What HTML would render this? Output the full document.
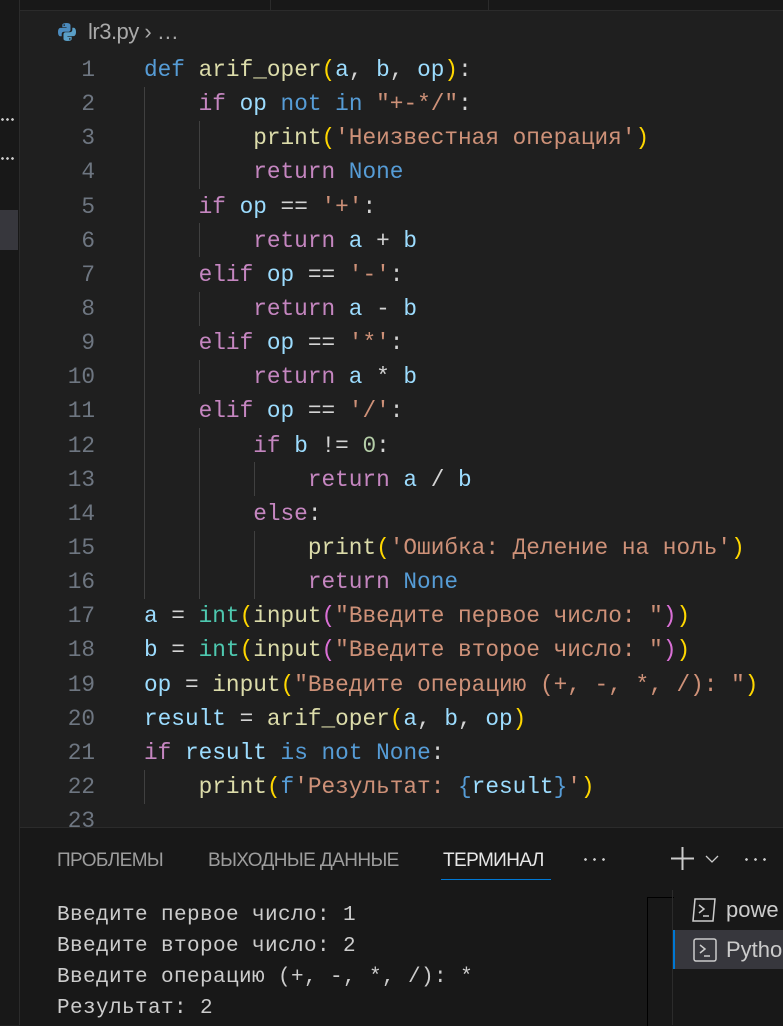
<!DOCTYPE html><html><head><meta charset="utf-8"><style>
*{margin:0;padding:0}
body{width:783px;height:1025px;background:#1f1f1f;position:relative;overflow:hidden;font-family:"Liberation Mono",monospace}
.left{position:absolute;left:0;top:0;width:19px;height:1025px;background:#181818;border-right:1px solid #2b2b2b}
.top{position:absolute;left:20px;top:0;width:763px;height:10px;background:#181818;border-bottom:1px solid #2b2b2b}
.ln{position:absolute;left:40px;width:55px;text-align:right;color:#6e7681;font-size:22.75px;line-height:34.14px}
.code{position:absolute;left:144px;font-size:22.75px;line-height:34.14px;color:#d4d4d4;white-space:pre}
.k{color:#569cd6}.f{color:#dcdcaa}.p{color:#9cdcfe}.c{color:#c586c0}.s{color:#ce9178}.y{color:#ffd700}.m{color:#da70d6}.n{color:#b5cea8}.t{color:#4ec9b0}
.g{position:absolute;width:1px;background:#404040}
.panel{position:absolute;left:20px;top:827px;width:763px;height:198px;background:#181818;border-top:1px solid #2b2b2b}
.tab{position:absolute;top:850px;font-family:"Liberation Sans",sans-serif;font-size:19px;color:#9d9d9d;letter-spacing:-0.6px}
.term{position:absolute;left:57px;top:900px;font-size:21px;line-height:31px;color:#cccccc;white-space:pre;letter-spacing:0.4px}
.dots{position:absolute;left:0;width:14px;height:3px;background:radial-gradient(circle,#ccc 1.2px,transparent 1.5px) 0 0/5px 3px repeat-x}
</style></head><body>
<div class="left"></div>
<div class="dots" style="top:118px"></div>
<div class="dots" style="top:157px"></div>
<div style="position:absolute;left:0;top:210px;width:18px;height:40px;background:#37373d"></div>
<div class="top"></div>
<div style="position:absolute;left:270px;top:0;width:1px;height:10px;background:#2b2b2b"></div>
<div style="position:absolute;left:488px;top:0;width:1px;height:10px;background:#2b2b2b"></div>
<svg style="position:absolute;left:57px;top:22px" width="20" height="20" viewBox="0 0 20 20"><path d="M9.5 1C5 1 5.3 3 5.3 3v2.2h4.3v.7H3.6S1 5.6 1 10s2.3 4.3 2.3 4.3h1.4v-2.1s-.1-2.4 2.3-2.4h4.2s2.3 0 2.3-2.2V3.4S13.8 1 9.5 1zM7.2 2.3a.8.8 0 110 1.6.8.8 0 010-1.6z" fill="#4b8bbe"/><path d="M10.5 19c4.5 0 4.2-2 4.2-2v-2.2h-4.3v-.7h6S19 14.4 19 10s-2.3-4.3-2.3-4.3h-1.4v2.1s.1 2.4-2.3 2.4H8.8s-2.3 0-2.3 2.2v4.2S6.2 19 10.5 19zm2.3-1.3a.8.8 0 110-1.6.8.8 0 010 1.6z" fill="#5a9fc7"/></svg>
<div style="position:absolute;left:88px;top:19px;font-family:'Liberation Sans',sans-serif;font-size:22px;color:#a9a9a9;letter-spacing:-0.5px">lr3.py <span style="font-size:22px">›</span> …</div>
<div class="ln" style="top:53px">1<br>2<br>3<br>4<br>5<br>6<br>7<br>8<br>9<br>10<br>11<br>12<br>13<br>14<br>15<br>16<br>17<br>18<br>19<br>20<br>21<br>22<br>23</div>
<div class="g" style="left:144px;top:87px;height:512px"></div>
<div class="g" style="left:199px;top:121px;height:68px"></div>
<div class="g" style="left:199px;top:223px;height:34px"></div>
<div class="g" style="left:199px;top:292px;height:34px"></div>
<div class="g" style="left:199px;top:360px;height:34px"></div>
<div class="g" style="left:199px;top:428px;height:171px"></div>
<div class="g" style="left:254px;top:462px;height:34px"></div>
<div class="g" style="left:254px;top:531px;height:68px"></div>
<div class="g" style="left:144px;top:770px;height:34px"></div>
<div class="code" style="top:53px"><span class="k">def</span> <span class="f">arif_oper</span><span class="y">(</span><span class="p">a</span>, <span class="p">b</span>, <span class="p">op</span><span class="y">)</span>:
    <span class="c">if</span> <span class="p">op</span> <span class="k">not</span> <span class="k">in</span> <span class="s">"+-*/"</span>:
        <span class="f">print</span><span class="y">(</span><span class="s">'Неизвестная операция'</span><span class="y">)</span>
        <span class="c">return</span> <span class="k">None</span>
    <span class="c">if</span> <span class="p">op</span> == <span class="s">'+'</span>:
        <span class="c">return</span> <span class="p">a</span> + <span class="p">b</span>
    <span class="c">elif</span> <span class="p">op</span> == <span class="s">'-'</span>:
        <span class="c">return</span> <span class="p">a</span> - <span class="p">b</span>
    <span class="c">elif</span> <span class="p">op</span> == <span class="s">'*'</span>:
        <span class="c">return</span> <span class="p">a</span> * <span class="p">b</span>
    <span class="c">elif</span> <span class="p">op</span> == <span class="s">'/'</span>:
        <span class="c">if</span> <span class="p">b</span> != <span class="n">0</span>:
            <span class="c">return</span> <span class="p">a</span> / <span class="p">b</span>
        <span class="c">else</span>:
            <span class="f">print</span><span class="y">(</span><span class="s">'Ошибка: Деление на ноль'</span><span class="y">)</span>
            <span class="c">return</span> <span class="k">None</span>
<span class="p">a</span> = <span class="t">int</span><span class="y">(</span><span class="f">input</span><span class="m">(</span><span class="s">"Введите первое число: "</span><span class="m">)</span><span class="y">)</span>
<span class="p">b</span> = <span class="t">int</span><span class="y">(</span><span class="f">input</span><span class="m">(</span><span class="s">"Введите второе число: "</span><span class="m">)</span><span class="y">)</span>
<span class="p">op</span> = <span class="f">input</span><span class="y">(</span><span class="s">"Введите операцию (+, -, *, /): "</span><span class="y">)</span>
<span class="p">result</span> = <span class="f">arif_oper</span><span class="y">(</span><span class="p">a</span>, <span class="p">b</span>, <span class="p">op</span><span class="y">)</span>
<span class="c">if</span> <span class="p">result</span> <span class="k">is</span> <span class="k">not</span> <span class="k">None</span>:
    <span class="f">print</span><span class="y">(</span><span class="k">f</span><span class="s">'Результат: </span><span class="k">{</span><span class="p">result</span><span class="k">}</span><span class="s">'</span><span class="y">)</span>
</div>
<div class="panel"></div>
<div class="tab" style="left:57px">ПРОБЛЕМЫ</div>
<div class="tab" style="left:208px">ВЫХОДНЫЕ ДАННЫЕ</div>
<div class="tab" style="left:443px;color:#e7e7e7">ТЕРМИНАЛ</div>
<div style="position:absolute;left:441px;top:879px;width:110px;height:1px;background:#0078d4"></div>
<div class="dots" style="left:581px;top:858px;width:25px;background-size:9px 3px"></div>
<svg style="position:absolute;left:670px;top:846px" width="25" height="25"><path d="M12.5 1V24M1 12.5H24" stroke="#ccc" stroke-width="2"/></svg>
<svg style="position:absolute;left:705px;top:855px" width="14" height="9"><path d="M1 1L7 7L13 1" stroke="#ccc" stroke-width="1.3" fill="none"/></svg>
<div class="dots" style="left:742px;top:858px;width:25px;background-size:9px 3px"></div>
<div style="position:absolute;left:647px;top:897px;width:26px;height:128px;border-left:1px solid #000;border-top:1px solid #000"></div>
<div style="position:absolute;left:672px;top:890px;width:1px;height:135px;background:#2b2b2b"></div>
<div style="position:absolute;left:673px;top:930px;width:110px;height:39px;background:#37373d;border-left:2px solid #0078d4"></div>
<svg style="position:absolute;left:691px;top:897px" width="26" height="26"><path d="M4 2H24L22 24H2Z" stroke="#ccc" stroke-width="1.5" fill="none"/><path d="M8 8L13 12L8 16M12 19H18" stroke="#ccc" stroke-width="1.5" fill="none"/></svg>
<svg style="position:absolute;left:692px;top:937px" width="26" height="26"><rect x="2" y="2" width="22" height="22" rx="2" stroke="#ccc" stroke-width="1.5" fill="none"/><path d="M8 8L13 12L8 16M12 19H18" stroke="#ccc" stroke-width="1.5" fill="none"/></svg>
<div style="position:absolute;left:726px;top:897px;color:#ccc;font-size:22px;font-family:'Liberation Sans',sans-serif">powe</div>
<div style="position:absolute;left:726px;top:937px;color:#ccc;font-size:22px;font-family:'Liberation Sans',sans-serif">Pytho</div>
<div class="term">Введите первое число: 1
Введите второе число: 2
Введите операцию (+, -, *, /): *
Результат: 2</div>
</body></html>
